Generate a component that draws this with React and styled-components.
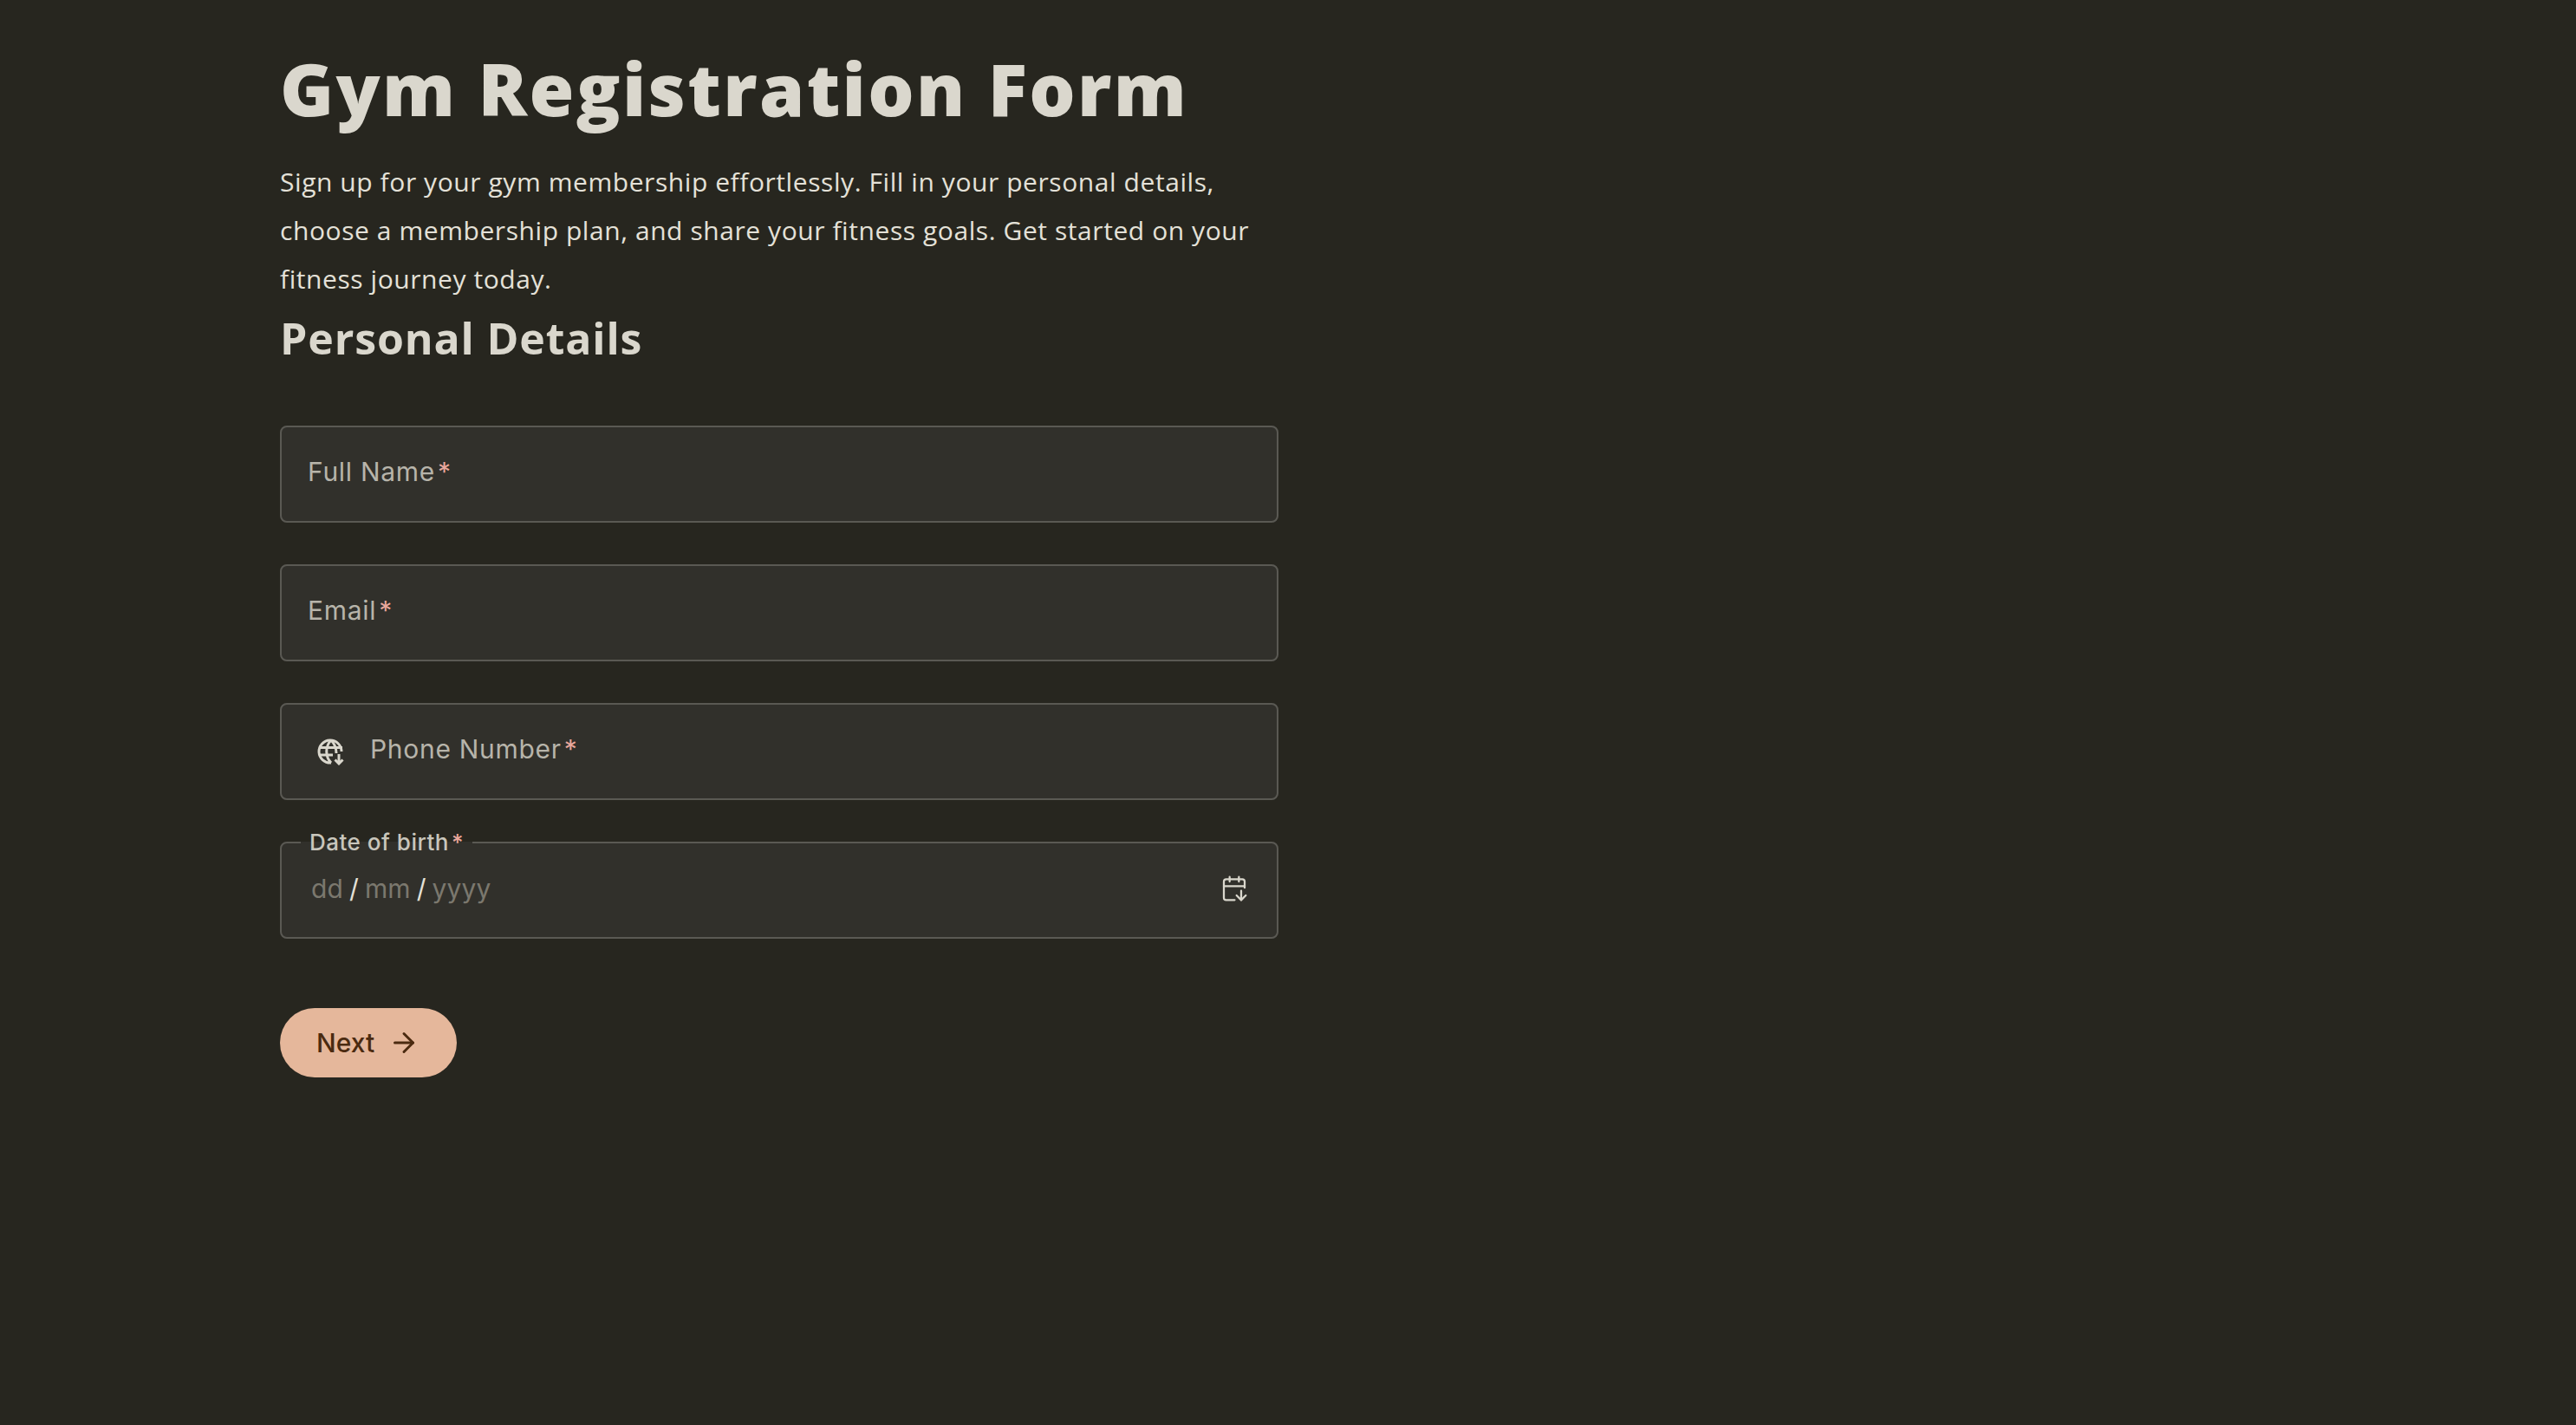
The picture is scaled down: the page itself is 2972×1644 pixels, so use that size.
import React from "react";
import styled, { createGlobalStyle } from "styled-components";
import { ArrowRight, CalendarArrowDown } from "lucide-react";

const Global = createGlobalStyle`
  html, body { margin: 0; padding: 0; background: #27261f; }
  body { min-height: 1644px; font-family: "Open Sans", "Liberation Sans", sans-serif; }
`;
const Page = styled.main`
  display: flex; flex-direction: column; width: 1152px; margin-left: 323px; padding-top: 50px; box-sizing: border-box;
`;
const Title = styled.h1`
  margin: 0 0 28px; font: 800 84px/104px "Open Sans", sans-serif; letter-spacing: 2.3px; color: #dad7cd;
`;
const Intro = styled.p`
  margin: 0 0 8px; width: 1130px; font: 400 30px/56px "Open Sans", sans-serif; letter-spacing: .57px; color: #e4e1d8;
`;
const Section = styled.h2`
  margin: 0 0 69px; font: 700 50px/64px "Open Sans", sans-serif; letter-spacing: .85px; color: #dad7cd;
`;
const Fields = styled.div`
  display: flex; flex-direction: column; gap: 48.5px;
`;
const Field = styled.fieldset`
  height: ${p => (p.$legend ? "124px" : "111.5px")}; margin: ${p => (p.$legend ? "-12.5px 0 0" : "0")}; padding: 0; box-sizing: border-box;
  min-width: 0; border: 2px solid #5a5953; border-radius: 8px; background: #31302b;
`;
const Row = styled.div`
  display: flex; align-items: center; gap: 29px; height: 107px; padding: 0 30px; box-sizing: border-box;
  ${p => p.$legend && "height: 95px; margin-top: -7px; padding: 0 33px 0 34px;"}
`;
const Legend = styled.legend`
  margin-left: 22px; padding: 0 10px; font: 500 26px/26px "Inter", sans-serif; letter-spacing: .5px; color: #c9c6bc;
`;
const Label = styled.span`
  flex: 1; margin-top: -6px; font: 400 30px/38px "Inter", sans-serif; letter-spacing: .7px; color: #b7b4aa;
`;
const Star = styled.span`
  margin-left: 3px; color: #e9a79c;
`;
const DateParts = styled.div`
  display: flex; align-items: center; gap: 7px; flex: 1; font: 400 30px/38px "Inter", sans-serif; letter-spacing: .1px; color: #7b786e;
`;
const Slash = styled.span` color: #e4e1d8; `;
const Next = styled.button`
  display: inline-flex; align-items: center; gap: 16px; align-self: flex-start; height: 80px; margin-top: 80px; padding: 0 43px 0 42px;
  border: 0; border-radius: 40px; background: #e5b79b; color: #4b2a10; font: 500 30px/38px "Inter", sans-serif;
`;
const GlobeIcon = styled.svg`
  flex: none; margin-left: 11px;
`;
const Globe = () => (
  <GlobeIcon width="32" height="32" viewBox="0 0 32 32" fill="none" stroke="#dad7cd" strokeWidth="3">
    <path d="M28 16a13 13 0 1 0-12 13" />
    <path d="M3 11.5h26M3 20h15M16 3c-7 7-7 19 0 26M16 3c5 5 6 10 6 15" />
    <path d="M25 19v11M20.5 25.5 25 30l4.500-4.500" />
  </GlobeIcon>
);
export default function App() {
  return (
    <>
      <Global />
      <Page>
        <Title>Gym Registration Form</Title>
        <Intro>Sign up for your gym membership effortlessly. Fill in your personal details, choose a membership plan, and share your fitness goals. Get started on your fitness journey today.</Intro>
        <Section>Personal Details</Section>
        <Fields>
          <Field><Row><Label>Full Name<Star>*</Star></Label></Row></Field>
          <Field><Row><Label>Email<Star>*</Star></Label></Row></Field>
          <Field><Row><Globe /><Label>Phone Number<Star>*</Star></Label></Row></Field>
          <Field $legend>
            <Legend>Date of birth<Star>*</Star></Legend>
            <Row $legend>
              <DateParts><span>dd</span><Slash>/</Slash><span>mm</span><Slash>/</Slash><span>yyyy</span></DateParts>
              <CalendarArrowDown size={32} color="#dad7cd" strokeWidth={1.7} />
            </Row>
          </Field>
        </Fields>
        <Next>Next <ArrowRight size={36} strokeWidth={2} /></Next>
      </Page>
    </>
  );
}
